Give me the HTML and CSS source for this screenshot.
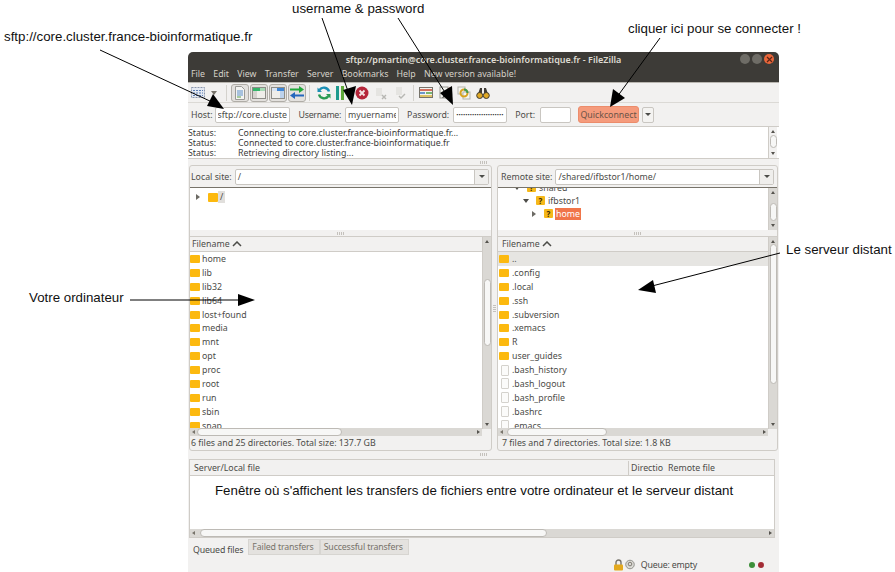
FILE: index.html
```html
<!DOCTYPE html>
<html lang="fr">
<head>
    <meta charset="UTF-8">
    <title>FileZilla</title>
    <link rel="stylesheet" href="styles.css">
</head>
<body>
    <div class="note note-site">sftp://core.cluster.france-bioinformatique.fr</div>
    <div class="note note-user">username &amp; password</div>
    <div class="note note-click">cliquer ici pour se connecter !</div>
    <div class="note note-local">Votre ordinateur</div>
    <div class="note note-remote">Le serveur distant</div>

    <div class="window">
        <div class="titlebar">
            <span class="title">sftp://pmartin@core.cluster.france-bioinformatique.fr - FileZilla</span>
            <div class="win-btns">
                <span class="win-btn"></span>
                <span class="win-btn"></span>
                <span class="win-btn close">
                    <svg width="7" height="7" viewBox="0 0 7 7"><path d="M1 1l5 5M6 1L1 6" stroke="#5a2415" stroke-width="1.2"/></svg>
                </span>
            </div>
        </div>
        <div class="menubar">
            <span>File</span><span>Edit</span><span>View</span><span>Transfer</span><span>Server</span><span>Bookmarks</span><span>Help</span><span>New version available!</span>
        </div>

        <div class="toolbar">
            <span class="tool tool-site">
                <svg width="14" height="12" viewBox="0 0 14 12"><rect x="0.5" y="0.5" width="13" height="10" fill="#e4e9f2" stroke="#8a96ad" stroke-dasharray="2 1"/><path d="M2 3.500h10M2 6h10M2 8.500h10" stroke="#5d7fb5" stroke-dasharray="2 1"/></svg>
            </span>
            <span class="tool-caret"></span>
            <span class="tool-sep"></span>
            <span class="tool-group">
                <span class="tool pressed">
                    <svg width="12" height="14" viewBox="0 0 12 14"><path d="M1.500.5h6l3 3v10h-9z" fill="#f4f4f2" stroke="#9a9a96"/><path d="M3 5h6M3 7h6M3 9h6" stroke="#5b8fc9"/><path d="M3 11h4" stroke="#5aa34a"/></svg>
                </span>
                <span class="tool pressed">
                    <svg width="14" height="12" viewBox="0 0 14 12"><rect x=".5" y=".5" width="13" height="11" fill="#efeeea" stroke="#8d8d88"/><rect x="1" y="1" width="7" height="3" fill="#35b56a"/><rect x="8" y="1" width="5" height="3" fill="#a5d9b4"/><rect x="1" y="4" width="4" height="7" fill="#d4d3ce"/></svg>
                </span>
                <span class="tool pressed">
                    <svg width="14" height="12" viewBox="0 0 14 12"><rect x=".5" y=".5" width="13" height="11" fill="#efeeea" stroke="#8d8d88"/><rect x="6" y="1" width="7" height="3" fill="#3f86d6"/><rect x="1" y="1" width="5" height="3" fill="#d9e4f2"/><rect x="9" y="4" width="4" height="7" fill="#bcd2ec"/></svg>
                </span>
                <span class="tool pressed">
                    <svg width="14" height="13" viewBox="0 0 14 13"><path d="M0 3.500h10" stroke="#22a83c" stroke-width="2"/><path d="M9 0l5 3.500L9 7z" fill="#22a83c"/><path d="M14 9.500H4" stroke="#2467bd" stroke-width="2"/><path d="M5 6L0 9.500 5 13z" fill="#2467bd"/></svg>
                </span>
            </span>
            <span class="tool-sep sep-first"></span>
            <span class="tool">
                <svg width="14" height="14" viewBox="0 0 14 14"><path d="M12 5.500A5.300 5.300 0 0 0 2.500 4" fill="none" stroke="#1c8fb5" stroke-width="2.400"/><path d="M2 8.500A5.300 5.300 0 0 0 11.500 10" fill="none" stroke="#2a9a52" stroke-width="2.400"/><path d="M0.500 1.500l0 4.500 4.500 0z" fill="#1c8fb5"/><path d="M13.500 12.500l0-4.500-4.500 0z" fill="#2a9a52"/></svg>
            </span>
            <span class="tool tool-bars">
                <svg width="14" height="14" viewBox="0 0 14 14"><rect x="2" y="0" width="3" height="14" fill="#1f9a8e"/><rect x="7" y="0" width="3" height="14" fill="#5fa83a"/></svg>
            </span>
            <span class="tool">
                <svg width="14" height="14" viewBox="0 0 14 14"><circle cx="7" cy="7" r="6.500" fill="#b5263a"/><path d="M4.500 4.500l5 5M9.500 4.500l-5 5" stroke="#f4e6e6" stroke-width="1.800"/></svg>
            </span>
            <span class="tool dim">
                <svg width="14" height="14" viewBox="0 0 14 14"><rect x="2" y="2" width="6" height="8" fill="#e2e2de"/><path d="M8 9l4 4M12 9l-4 4" stroke="#a9a9a4" stroke-width="1.400"/></svg>
            </span>
            <span class="tool dim">
                <svg width="14" height="14" viewBox="0 0 14 14"><rect x="3" y="1" width="6" height="8" fill="#e2e2de"/><path d="M6 10l2 2 4-4" fill="none" stroke="#a9a9a4" stroke-width="1.400"/></svg>
            </span>
            <span class="tool-sep sep-second"></span>
            <span class="tool">
                <svg width="14" height="13" viewBox="0 0 14 13"><rect x=".5" y="1.500" width="13" height="10" fill="#f3f3f0" stroke="#77736a"/><path d="M1 4h12" stroke="#c9442f" stroke-width="1.600"/><path d="M1 7h5" stroke="#3f79c2" stroke-width="1.600"/><path d="M7 7h6" stroke="#4fa04a" stroke-width="1.600"/><path d="M1 10h12" stroke="#d6b23a" stroke-width="1.400"/></svg>
            </span>
            <span class="tool">
                <svg width="14" height="14" viewBox="0 0 14 14"><rect x="2" y="1" width="8" height="11" fill="#f4f4f0" stroke="#9a9a94"/><path d="M12 2L6 9" stroke="#c3412c" stroke-width="2"/><path d="M6 9l-2 3 3-1" fill="#3a3a38"/></svg>
            </span>
            <span class="tool">
                <svg width="14" height="14" viewBox="0 0 14 14"><rect x="1" y="1" width="7" height="7" fill="#f4f4f0" stroke="#b5b5ae"/><rect x="6" y="6" width="7" height="7" fill="#f4f4f0" stroke="#b5b5ae"/><circle cx="7" cy="7" r="3.500" fill="none" stroke="#d8a31f" stroke-width="2"/><path d="M7 3.500a3.500 3.500 0 0 1 3.500 3.500" fill="none" stroke="#3f9a4f" stroke-width="2"/></svg>
            </span>
            <span class="tool">
                <svg width="14" height="13" viewBox="0 0 14 13"><path d="M2 8l2-6h2v6zM12 8l-2-6H8v6z" fill="#3f3b34"/><circle cx="3.700" cy="9.500" r="3" fill="#e0a925" stroke="#3f3b34"/><circle cx="10.300" cy="9.500" r="3" fill="#e0a925" stroke="#3f3b34"/></svg>
            </span>
        </div>

        <div class="quickbar">
            <label>Host:</label>
            <input class="field host" value="sftp://core.cluster.france-bioinformatique.fr">
            <label class="gap-user">Username:</label>
            <input class="field user" value="myuername">
            <label class="gap-label">Password:</label>
            <input class="field pass" type="password" value="motdepasseduserveur12">
            <label class="gap-label">Port:</label>
            <input class="field port">
            <span class="btn-quick">Quickconnect</span>
            <span class="btn-drop"><i class="caret"></i></span>
        </div>

        <div class="log">
            <div class="log-lines">
                <div class="log-row"><span class="log-key">Status:</span><span>Connecting to core.cluster.france-bioinformatique.fr...</span></div>
                <div class="log-row"><span class="log-key">Status:</span><span>Connected to core.cluster.france-bioinformatique.fr</span></div>
                <div class="log-row"><span class="log-key">Status:</span><span>Retrieving directory listing...</span></div>
            </div>
            <div class="vscroll log-scroll"><i class="v-up"></i><span class="thumb short"></span><i class="v-down"></i></div>
        </div>
        <div class="splitter"><span class="grip"></span></div>

        <div class="panes">
            <div class="pane pane-local">
                <div class="site-row">
                    <span>Local site:</span>
                    <span class="combo"><span class="combo-text">/</span><span class="combo-btn"><i class="caret"></i></span></span>
                </div>
                <div class="tree">
                    <div class="tree-row tree-local">
                        <i class="arrow-right"></i>
                        <span class="folder"></span>
                        <span class="tree-sel">/</span>
                    </div>
                </div>
                <div class="splitter"><span class="grip"></span></div>
                <div class="list">
                    <div class="list-main">
                        <div class="list-head">Filename <svg width="10" height="6" viewBox="0 0 10 6"><path d="M1 5l4-4 4 4" fill="none" stroke="#4c4c48" stroke-width="1.500"/></svg></div>
                        <div class="rows" id="local-rows"></div>
                        <div class="hscroll"><i class="h-left"></i><span class="h-thumb local"></span><i class="h-right"></i></div>
                    </div>
                    <div class="vscroll"><i class="v-up"></i><span class="thumb local"></span><i class="v-down"></i></div>
                </div>
                <div class="pane-status">6 files and 25 directories. Total size: 137.7 GB</div>
            </div>

            <div class="pane-gap"><span class="grip grip-v"></span></div>

            <div class="pane pane-remote">
                <div class="site-row">
                    <span>Remote site:</span>
                    <span class="combo"><span class="combo-text">/shared/ifbstor1/home/</span><span class="combo-btn"><i class="caret"></i></span></span>
                </div>
                <div class="tree tree-remote">
                    <div class="tree-lines">
                        <div class="tree-row indent-1"><i class="arrow-down"></i><span class="folder ask">?</span><span>shared</span></div>
                        <div class="tree-row indent-2"><i class="arrow-down"></i><span class="folder ask">?</span><span>ifbstor1</span></div>
                        <div class="tree-row indent-3"><i class="arrow-right"></i><span class="folder ask">?</span><span class="tree-hl">home</span></div>
                    </div>
                    <div class="vscroll tree-scroll"><i class="v-up"></i><span class="thumb tree-thumb"></span><i class="v-down"></i></div>
                </div>
                <div class="splitter"><span class="grip"></span></div>
                <div class="list">
                    <div class="list-main">
                        <div class="list-head">Filename <svg width="10" height="6" viewBox="0 0 10 6"><path d="M1 5l4-4 4 4" fill="none" stroke="#4c4c48" stroke-width="1.500"/></svg></div>
                        <div class="rows" id="remote-rows"></div>
                        <div class="hscroll"><i class="h-left"></i><span class="h-thumb remote"></span><i class="h-right"></i></div>
                    </div>
                    <div class="vscroll"><i class="v-up"></i><span class="thumb remote"></span><i class="v-down"></i></div>
                </div>
                <div class="pane-status">7 files and 7 directories. Total size: 1.8 KB</div>
            </div>
        </div>
        <div class="splitter"><span class="grip"></span></div>

        <div class="transfers">
            <div class="transfer-head">
                <span class="th-file">Server/Local file</span>
                <span class="th-dir">Directio</span>
                <span class="th-remote">Remote file</span>
            </div>
            <div class="transfer-body">Fenêtre où s'affichent les transfers de fichiers entre votre ordinateur et le serveur distant</div>
            <div class="hscroll"><i class="h-left"></i><span class="h-thumb transfer"></span><i class="h-right"></i></div>
        </div>

        <div class="tabs">
            <span class="tab active">Queued files</span>
            <span class="tab">Failed transfers</span>
            <span class="tab">Successful transfers</span>
        </div>
        <div class="statusbar">
            <svg width="11" height="12" viewBox="0 0 11 12"><path d="M3 6V3.500a2.500 2.500 0 0 1 5 0V6" fill="none" stroke="#77736a" stroke-width="1.400"/><rect x="1" y="5.500" width="9" height="6" rx="1" fill="#e3a91f"/></svg>
            <svg class="key-icon" width="10" height="11" viewBox="0 0 11 11"><circle cx="5.500" cy="5.500" r="4.700" fill="#dcdbd6" stroke="#8a8a84"/><circle cx="5.500" cy="5" r="2" fill="none" stroke="#77736a"/></svg>
            <span class="queue">Queue: empty</span>
            <span class="led green"></span>
            <span class="led red"></span>
        </div>
    </div>

    <svg class="arrows" width="895" height="572" viewBox="0 0 895 572">
        <g stroke="#000" stroke-width="1" fill="none">
            <path d="M100 50L212 102"/>
            <path d="M322 18L349 94"/>
            <path d="M398 18L446 94"/>
            <path d="M660 38L617 97"/>
            <path d="M130 300H240"/>
            <path d="M780 253L652 286"/>
        </g>
        <g fill="#000">
            <path d="M224 109L207 106 213 94z"/>
            <path d="M352 105L343 90 356 86z"/>
            <path d="M453 105L440 93 452 86z"/>
            <path d="M610 107L613 89 625 98z"/>
            <path d="M255 300L238 294V306z"/>
            <path d="M638 290L653 280 656 293z"/>
        </g>
    </svg>

    <script>
        const localFiles = ['home', 'lib', 'lib32', 'lib64', 'lost+found', 'media', 'mnt', 'opt', 'proc', 'root', 'run', 'sbin', 'snap'];
        const remoteFiles = [
            ['..', 1], ['.config', 1], ['.local', 1], ['.ssh', 1], ['.subversion', 1], ['.xemacs', 1], ['R', 1], ['user_guides', 1],
            ['.bash_history', 0], ['.bash_logout', 0], ['.bash_profile', 0], ['.bashrc', 0], ['.emacs', 0]
        ];

        function addRow(list, name, isDir, selected) {
            const row = document.createElement('div');
            row.className = selected ? 'row selected' : 'row';
            const icon = document.createElement('span');
            icon.className = isDir ? 'folder' : 'file';
            const label = document.createElement('span');
            label.textContent = name;
            row.appendChild(icon);
            row.appendChild(label);
            list.appendChild(row);
        }

        const localList = document.getElementById('local-rows');
        localFiles.forEach(name => addRow(localList, name, true, false));
        const remoteList = document.getElementById('remote-rows');
        remoteFiles.forEach((file, i) => addRow(remoteList, file[0], file[1] === 1, i === 0));
    </script>
</body>
</html>
```

FILE: styles.css
```css
* {
    box-sizing: border-box;
}
html, body {
    margin: 0;
    height: 572px;
    overflow: hidden;
}
body {
    position: relative;
    background: white;
    width: 895px;
}

/* annotations around the window */
.note {
    position: absolute;
    font-family: "Liberation Sans", Arial, sans-serif;
    font-size: 13.300px;
    line-height: 14px;
    color: #111;
    white-space: nowrap;
}
.note-site { left: 4px; top: 30px; }
.note-user { left: 292px; top: 2px; }
.note-click { left: 628px; top: 22px; }
.note-local { left: 29px; top: 291px; }
.note-remote { left: 786px; top: 243px; }
.arrows {
    position: absolute;
    left: 0;
    top: 0;
    pointer-events: none;
}

/* window */
.window {
    position: absolute;
    left: 188px;
    top: 52px;
    width: 591px;
    height: 520px;
    background: #f2f1f0;
    font-family: "Noto Sans", "Open Sans", sans-serif;
    font-size: 8.800px;
    color: #4c4c48;
    display: flex;
    flex-direction: column;
    overflow: hidden;
    border-radius: 5px 5px 0 0;
}
.titlebar {
    height: 14px;
    background: #3d3b37;
    color: #dfdbd2;
    display: flex;
    align-items: center;
    justify-content: center;
    position: relative;
    font-size: 9px;
    font-weight: 600;
    flex: none;
}
.win-btns {
    position: absolute;
    right: 5px;
    top: 2px;
    display: flex;
    gap: 2px;
}
.win-btn {
    width: 10px;
    height: 10px;
    border-radius: 50%;
    background: #6e6c66;
    display: flex;
    align-items: center;
    justify-content: center;
}
.win-btn.close {
    background: #e9663a;
}
.menubar {
    height: 16px;
    background: #3d3b37;
    color: #d6d2c9;
    display: flex;
    align-items: center;
    gap: 8.200px;
    padding-left: 3px;
    flex: none;
}
.toolbar {
    height: 21px;
    border-top: 1px solid #b9b6b0;
    border-bottom: 1px solid #dbd9d5;
    display: flex;
    align-items: center;
    padding-left: 1px;
    flex: none;
}
.tool {
    width: 18px;
    height: 18px;
    display: flex;
    align-items: center;
    justify-content: center;
    margin-right: 1px;
}
.tool.pressed {
    background: #e3e1de;
    border: 1px solid #b0ada7;
    border-radius: 3px;
}
.tool.dim {
    opacity: 0.8;
}
.tool-bars svg {
    margin-left: -4px;
}
.tool-caret {
    width: 0;
    height: 0;
    border: 3px solid transparent;
    border-top: 4px solid #77736a;
    margin: 3px 5px 0 3px;
}
.tool-sep {
    width: 1px;
    height: 16px;
    background: #d4d2cd;
    margin: 0 4px;
}
.tool-sep.sep-first {
    margin: 0 5px 0 2px;
}
.tool-sep.sep-second {
    margin: 0 3px;
}
.tool-group {
    display: flex;
}
.quickbar {
    height: 24px;
    display: flex;
    align-items: center;
    padding-left: 3px;
    flex: none;
    border-bottom: 1px solid #cfccc7;
}
.field {
    height: 16px;
    border: 1px solid #c9c6c1;
    border-radius: 2px;
    background: white;
    font-family: inherit;
    font-size: 8.800px;
    color: #4c4c48;
    padding: 0 2px;
    margin-left: 4px;
    outline: none;
}
.host { width: 75px; margin-left: 2px; }
.user { width: 54px; }
.pass { width: 54px; font-size: 6px; color: #333; }
.port { width: 31px; margin-left: 5px; }
.gap-user { margin-left: 9px; letter-spacing: -0.300px; }
.gap-label { margin-left: 8px; }
.btn-quick {
    margin-left: 7px;
    width: 61px;
    height: 17px;
    background: #f59b7c;
    border: 1px solid #ec8c6b;
    border-radius: 3px;
    display: flex;
    align-items: center;
    justify-content: center;
    color: #6b5347;
}
.btn-drop {
    margin-left: 3px;
    width: 12px;
    height: 16px;
    background: #f4f3f1;
    border: 1px solid #c9c6c1;
    border-radius: 2px;
    display: flex;
    align-items: center;
    justify-content: center;
}
.caret {
    width: 0;
    height: 0;
    border: 3px solid transparent;
    border-top: 3px solid #4c4c48;
    border-bottom: 0;
}
.log {
    height: 32px;
    display: flex;
    background: white;
    flex: none;
    border-bottom: 1px solid #cfccc7;
}
.log-lines {
    flex: 1;
    line-height: 10px;
    padding-top: 1px;
    color: #3c3c3a;
}
.log-row {
    display: flex;
}
.log-key {
    width: 50px;
}

/* scrollbars */
.vscroll {
    width: 9px;
    background: #dad8d4;
    border-left: 1px solid #cfccc7;
    display: flex;
    flex-direction: column;
    align-items: center;
    flex: none;
    margin-bottom: 7px;
    padding: 3px 0;
}
.log-scroll {
    margin: 0 2px 0 0;
    background: #f2f1f0;
}
.tree-scroll {
    margin-bottom: 0;
}
.v-up, .v-down {
    width: 0;
    height: 0;
    border: 2px solid transparent;
    flex: none;
}
.v-up {
    border-bottom: 3px solid #55534e;
    border-top: 0;
}
.v-down {
    border-top: 3px solid #55534e;
    border-bottom: 0;
    margin-top: auto;
}
.thumb {
    width: 7px;
    background: #f7f7f6;
    border: 1px solid #bdbab5;
    border-radius: 4px;
    display: block;
    flex: none;
}
.thumb.short { height: 13px; margin-top: 2px; }
.thumb.local { height: 67px; margin-top: 36px; }
.thumb.remote { height: 140px; margin-top: 1px; }
.thumb.tree-thumb { height: 18px; margin-top: 9px; }
.hscroll {
    height: 8px;
    background: #dad8d4;
    display: flex;
    align-items: center;
    justify-content: space-between;
    flex: none;
    position: relative;
    padding: 0 2px;
}
.h-left, .h-right {
    width: 0;
    height: 0;
    border: 2px solid transparent;
}
.h-left {
    border-right: 3px solid #77736a;
    border-left: 0;
}
.h-right {
    border-left: 3px solid #55534e;
    border-right: 0;
}
.h-thumb {
    position: absolute;
    left: 7px;
    top: 0;
    height: 8px;
    background: #f7f7f6;
    border: 1px solid #bdbab5;
    border-radius: 4px;
}
.h-thumb.local { width: 145px; }
.h-thumb.remote { width: 100px; left: 9px; }
.h-thumb.transfer { width: 347px; left: 10px; }

/* grips on the sashes */
.splitter {
    height: 6px;
    display: flex;
    align-items: center;
    justify-content: center;
    flex: none;
}
.grip {
    width: 7px;
    height: 3px;
    background: repeating-linear-gradient(90deg, #c4c1bc 0 1px, transparent 1px 2px);
}
.grip-v {
    width: 3px;
    height: 7px;
    background: repeating-linear-gradient(0deg, #c4c1bc 0 1px, transparent 1px 2px);
}

.panes {
    height: 286px;
    display: grid;
    grid-template-columns: 303px 5px 281px;
    padding: 0 1px;
    flex: none;
}
.pane-gap {
    display: flex;
    align-items: center;
    justify-content: center;
}
.pane {
    min-width: 0;
    display: flex;
    flex-direction: column;
    border: 1px solid #cfccc7;
    border-radius: 3px;
}
.site-row {
    height: 21px;
    display: flex;
    align-items: center;
    gap: 3px;
    padding: 0 3px;
    flex: none;
}
.pane-local .site-row {
    padding: 0 2px 0 1px;
}
.combo {
    flex: 1;
    height: 16px;
    border: 1px solid #c9c6c1;
    background: white;
    border-radius: 2px;
    display: flex;
    align-items: center;
    justify-content: space-between;
    min-width: 0;
}
.combo-text {
    padding-left: 2px;
}
.combo-btn {
    width: 14px;
    height: 100%;
    background: #efeeec;
    border-left: 1px solid #c9c6c1;
    display: flex;
    align-items: center;
    justify-content: center;
}
.tree {
    height: 43px;
    background: white;
    border-top: 1px solid #77736a;
    flex: none;
}
.tree-remote {
    display: flex;
    overflow: hidden;
}
.tree-lines {
    flex: 1;
    margin-top: -7px;
}
.tree-row {
    height: 13px;
    display: flex;
    align-items: center;
    gap: 3px;
}
.tree-local {
    height: 14px;
    margin-top: 2px;
    padding-left: 6px;
}
.tree-local .folder {
    width: 10px;
}
.indent-1 { padding-left: 16px; }
.indent-2 { padding-left: 25px; }
.indent-3 { padding-left: 34px; }
.arrow-right {
    width: 0;
    height: 0;
    border: 3px solid transparent;
    border-left: 4px solid #6c6a64;
    border-right: 0;
    margin-right: 5px;
}
.arrow-down {
    width: 0;
    height: 0;
    border: 3px solid transparent;
    border-top: 4px solid #4c4c48;
    border-bottom: 0;
    margin-right: 4px;
}
.folder {
    width: 9px;
    height: 9px;
    background: #fcb90f;
    border-radius: 1px;
    flex: none;
    display: inline-flex;
    align-items: center;
    justify-content: center;
    font-size: 8px;
    font-weight: 700;
    color: #3a2a00;
}
.folder.ask {
    background: #f5b81a;
}
.tree-sel {
    background: #e1dfdc;
    padding: 0 2px;
    margin-left: -3px;
}
.tree-hl {
    background: #f0754a;
    color: white;
    padding: 0 1px;
    margin-left: -1px;
}
.list {
    height: 200px;
    display: flex;
    background: #f2f1f0;
    border-top: 1px solid #cfccc7;
    flex: none;
}
.list-main {
    flex: 1;
    min-width: 0;
    display: flex;
    flex-direction: column;
}
.list-head {
    height: 15px;
    border-bottom: 1px solid #cfccc7;
    padding-left: 2px;
    line-height: 15px;
    flex: none;
}
.pane-remote .list-head {
    padding-left: 4px;
}
.rows {
    flex: 1;
    overflow: hidden;
    background: white;
}
.row {
    height: 13.900px;
    display: flex;
    align-items: center;
    gap: 2px;
}
.pane-remote .row {
    padding-left: 1px;
    gap: 3px;
}
.row.selected {
    background: #e6e5e2;
}
.row .folder {
    width: 10px;
    height: 8px;
}
.file {
    width: 8px;
    height: 11px;
    margin-left: 2px;
    background: #fbfbfa;
    border: 1px solid #d4d2cd;
    border-radius: 1px;
    flex: none;
}
.pane-status {
    flex: 1;
    display: flex;
    align-items: center;
    padding-left: 1px;
}
.pane-remote .pane-status {
    padding-left: 4px;
}
.transfers {
    height: 79px;
    margin: 2px 4px 0 1px;
    border: 1px solid #cfccc7;
    display: flex;
    flex-direction: column;
    flex: none;
}
.transfer-head {
    height: 16px;
    padding-top: 1px;
    display: flex;
    align-items: center;
    border-bottom: 1px solid #cfccc7;
    flex: none;
}
.th-file {
    width: 438px;
    padding-left: 4px;
}
.th-dir {
    width: 37px;
    height: 100%;
    border-left: 1px solid #cfccc7;
    display: flex;
    align-items: center;
    padding-left: 2px;
    overflow: hidden;
}
.th-remote {
    padding-left: 3px;
}
.transfer-body {
    flex: 1;
    background: white;
    font-family: "Liberation Sans", Arial, sans-serif;
    font-size: 13.300px;
    color: #111;
    padding: 7px 0 0 25px;
    white-space: nowrap;
}
.tabs {
    height: 19px;
    display: flex;
    align-items: flex-start;
    padding: 1px 0 0 2px;
    flex: none;
    letter-spacing: -0.150px;
}
.tab {
    height: 16px;
    padding: 0 5px 0 3px;
    display: flex;
    align-items: center;
    background: #e4e2df;
    border: 1px solid #d7d5d1;
    color: #77736a;
}
.tab.active {
    height: 18px;
    background: #f2f1f0;
    border: none;
    color: #4c4c48;
    padding-top: 3px;
}
.statusbar {
    flex: 1;
    display: flex;
    align-items: center;
    justify-content: flex-end;
    padding-right: 15px;
}
.key-icon {
    margin-left: 1px;
}
.queue {
    margin: 0 49px 0 6px;
    letter-spacing: -0.200px;
}
.led {
    width: 6px;
    height: 6px;
    border-radius: 50%;
    margin-left: 3px;
}
.led.green { background: #3d8f3a; }
.led.red { background: #a32c35; }
```
